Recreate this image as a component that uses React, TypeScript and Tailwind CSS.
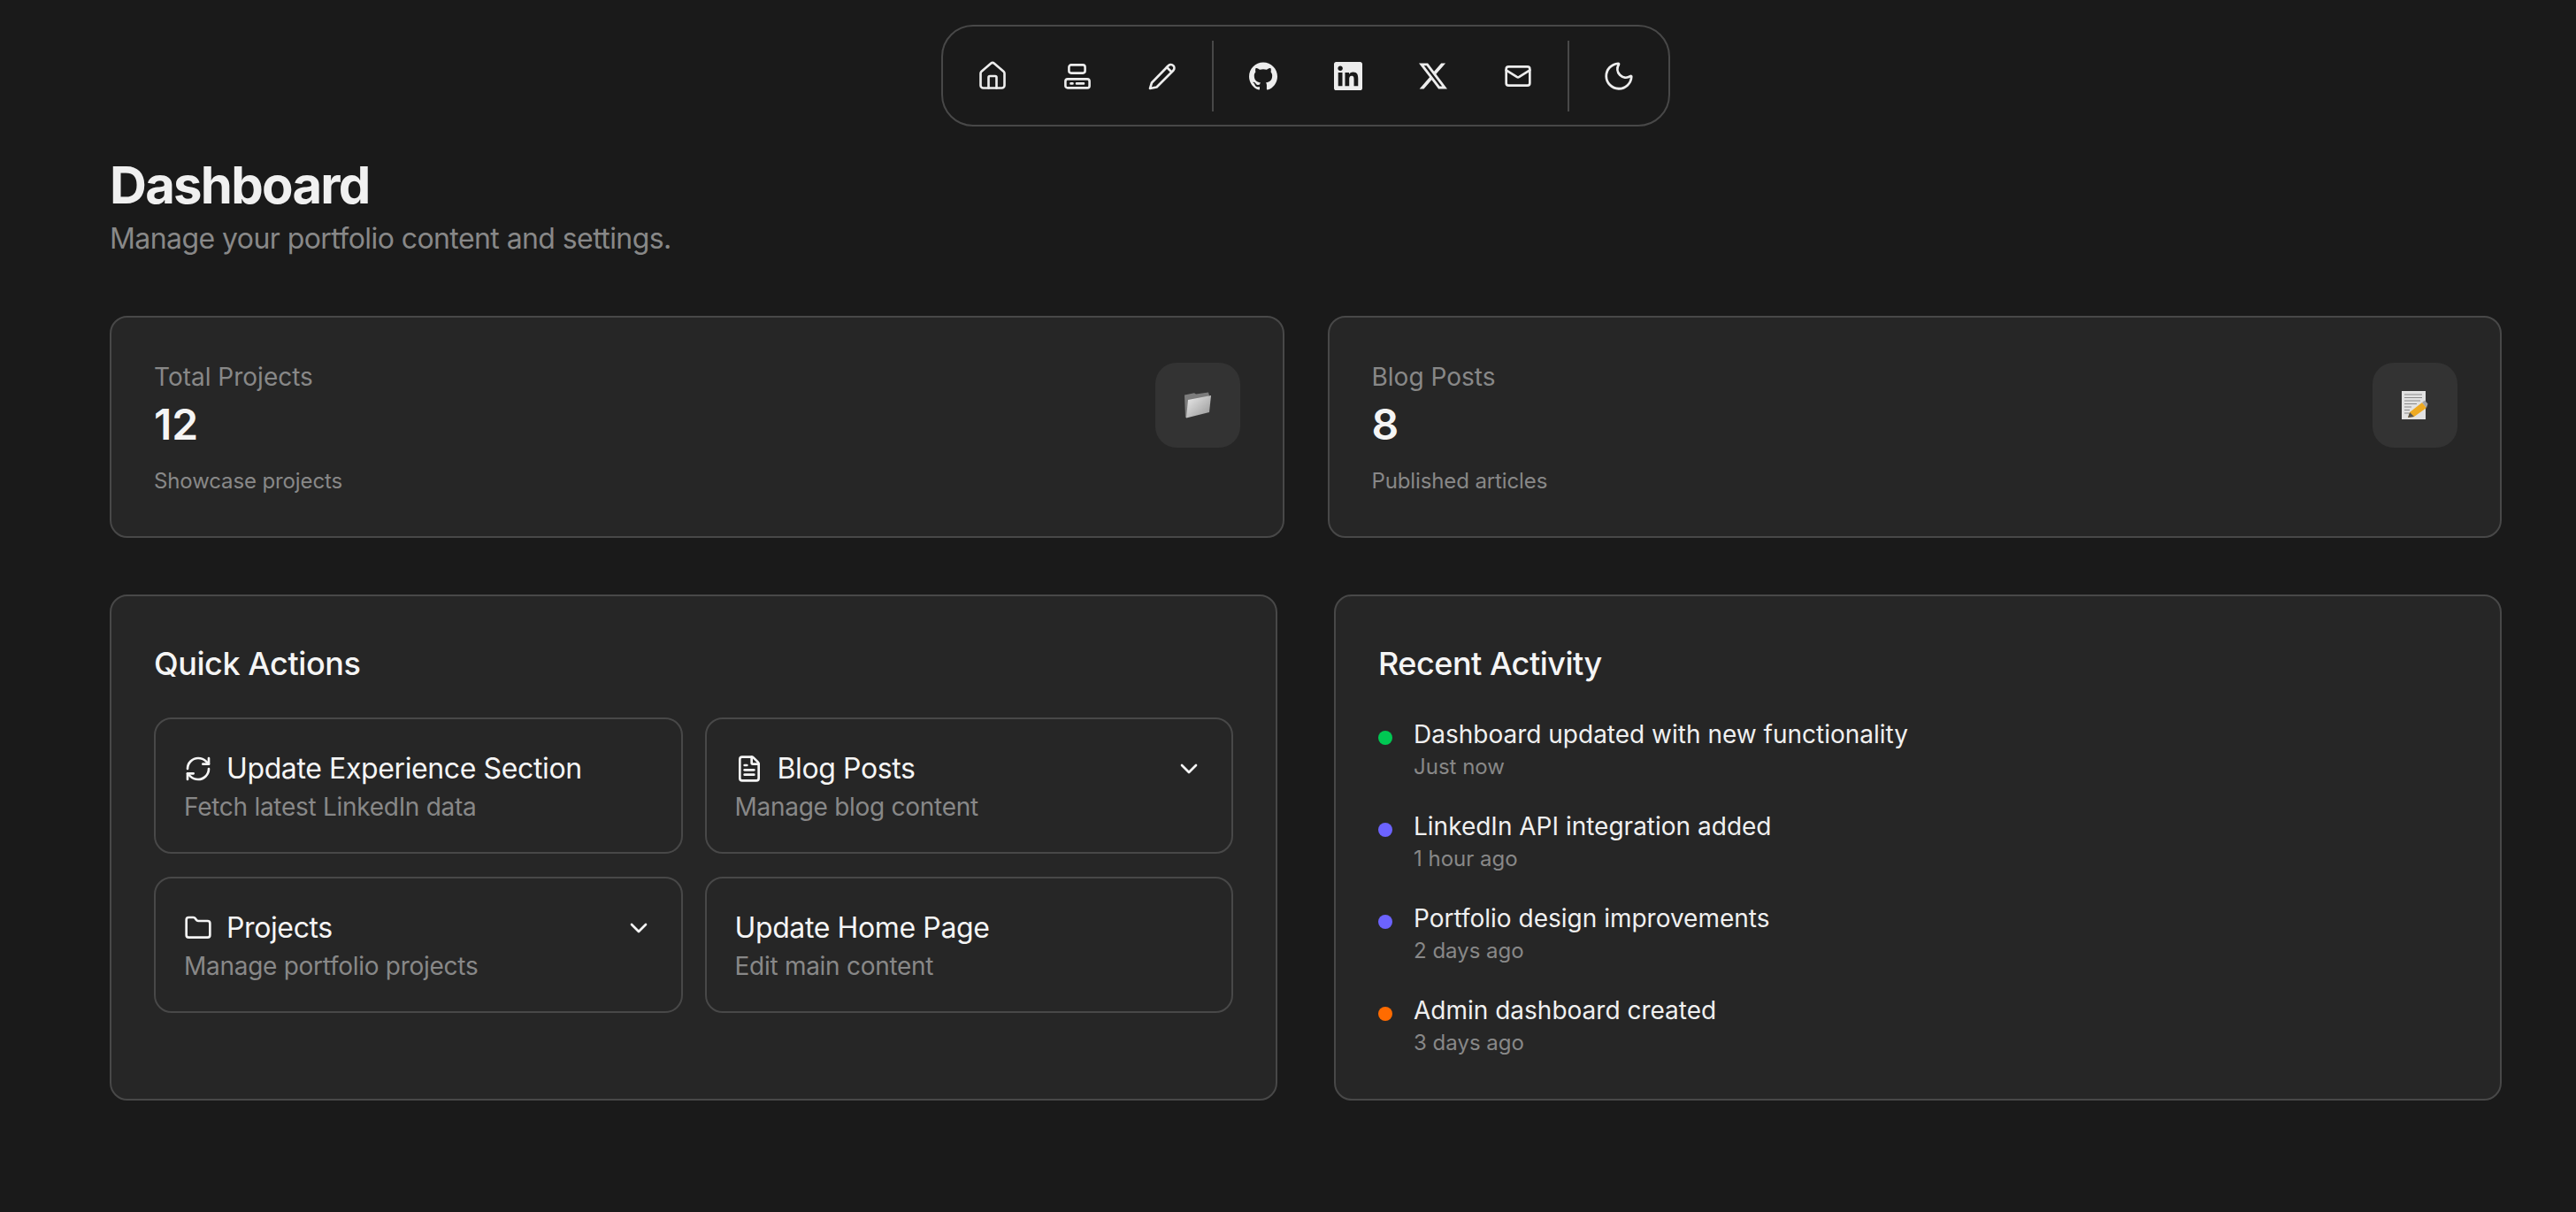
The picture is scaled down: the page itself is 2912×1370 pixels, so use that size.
import { ChevronDown, FileText, Folder, House, Mail, Moon, RefreshCw } from 'lucide-react';
import type { ReactNode } from 'react';
import { SiGithub, SiLinkedin, SiX } from 'react-icons/si';

function StackIcon() {
  return (
    <svg width="36" height="36" viewBox="0 0 36 36" fill="none" stroke="currentColor" strokeWidth="2.6" strokeLinecap="round">
      <rect x="8.4" y="5.4" width="18.2" height="9.2" rx="2.5" />
      <rect x="4.4" y="21.4" width="27.2" height="10" rx="2.5" />
      <path d="M10.5 26.400h2M17 26.400h8" />
    </svg>
  );
}

function PencilIcon() {
  return (
    <svg width="36" height="36" viewBox="0 0 36 36" fill="none" stroke="currentColor" strokeWidth="2.6" strokeLinecap="round" strokeLinejoin="round">
      <path d="M4 32l2-6.500L25 6a3.900 3.900 0 0 1 5.500 5.500L11.500 30.500z" />
      <path d="M23 8l5 5" />
    </svg>
  );
}

function FolderEmoji() {
  return (
    <svg width="32" height="32" viewBox="0 0 32 32">
      <defs>
        <linearGradient id="folder-front" x1="0" y1="0" x2="1" y2="1">
          <stop offset="0" stopColor="#ececec" />
          <stop offset="1" stopColor="#949494" />
        </linearGradient>
      </defs>
      <path d="M1 4.500l11-2.200 2 1.200 14-2 1 3.500L4 30l-2 0z" fill="#7c7c7c" />
      <path d="M5 10l26-5-2 19-26 6.500z" fill="url(#folder-front)" />
    </svg>
  );
}

function NoteEmoji() {
  return (
    <svg width="32" height="32" viewBox="0 0 32 32">
      <rect x="1" y="0" width="27" height="32" fill="#e2e2e2" />
      <path d="M4 4h20M4 7.500h20M4 11h18M4 14.500h14M4 18h8M4 21.500h6M4 25h5" stroke="#8a8a8a" strokeWidth="1" />
      <path d="M10 24L24 13l5 6-14 10-7 1z" fill="#eeaa22" />
      <path d="M24 13l3-2.500 3.500 4-1.500 4.500z" fill="#a3a3a3" />
      <path d="M8 30l2-6 5 5z" fill="#555" />
    </svg>
  );
}

function NavButton({ children }: { children: ReactNode }) {
  return <button className="flex h-[80px] w-24 items-center justify-center text-[#ededed]">{children}</button>;
}

function NavDivider() {
  return <div className="mx-2 h-[80px] w-[2px] bg-[#484848]" />;
}

function StatCard({ label, value, hint, icon }: { label: string; value: string; hint: string; icon: ReactNode }) {
  return (
    <div className="flex items-start justify-between rounded-[20px] border-2 border-[#484848] bg-[#262626] px-12 pt-[47px] pb-[46px]">
      <div>
        <p className="text-[28px] leading-[40px] text-[#888888]">{label}</p>
        <p className="mt-[6px] text-[48px] leading-[56px] font-semibold text-[#f5f5f5]">{value}</p>
        <p className="mt-5 text-[24px] leading-[32px] tracking-[-0.005em] text-[#888888]">{hint}</p>
      </div>
      <div className="mt-1 flex h-24 w-24 items-center justify-center rounded-[24px] bg-[#333333]">{icon}</div>
    </div>
  );
}

function ActionCard({ title, desc, icon, chevron }: { title: string; desc: string; icon?: ReactNode; chevron?: boolean }) {
  return (
    <div className="h-[154px] rounded-[20px] border-2 border-[#484848] px-8 pt-[34px]">
      <div className="flex h-[44px] items-center gap-4 text-[32px] leading-[44px] font-normal tracking-[-0.012em] text-[#f5f5f5]">
        {icon}
        <span>{title}</span>
        {chevron && <ChevronDown size={32} className="ml-auto" />}
      </div>
      <p className="mt-[1px] text-[28px] leading-[40px] tracking-[-0.01em] text-[#888888]">{desc}</p>
    </div>
  );
}

const activity = [
  { text: 'Dashboard updated with new functionality', time: 'Just now', dot: 'bg-[#00c853]' },
  { text: 'LinkedIn API integration added', time: '1 hour ago', dot: 'bg-[#6c63ff]' },
  { text: 'Portfolio design improvements', time: '2 days ago', dot: 'bg-[#6c63ff]' },
  { text: 'Admin dashboard created', time: '3 days ago', dot: 'bg-[#ff6b00]' },
];

export default function App() {
  return (
    <div className="min-h-screen bg-[#1a1a1a] pt-[28px] pr-[84px] pl-[124px] font-['Inter',sans-serif]">
      <div className="flex justify-center">
        <nav className="flex h-[115px] items-center rounded-[36px] border-2 border-[#484848] px-2">
          <NavButton><House size={36} strokeWidth={1.75} /></NavButton>
          <NavButton><StackIcon /></NavButton>
          <NavButton><PencilIcon /></NavButton>
          <NavDivider />
          <NavButton><SiGithub size={32} /></NavButton>
          <NavButton><SiLinkedin size={32} /></NavButton>
          <NavButton><SiX size={32} /></NavButton>
          <NavButton><Mail size={32} strokeWidth={2} /></NavButton>
          <NavDivider />
          <NavButton><Moon size={38} strokeWidth={1.75} /></NavButton>
        </nav>
      </div>

      <h1 className="mt-[34px] text-[58px] leading-[64px] font-bold tracking-[-0.03em] text-[#f0f0f0]">Dashboard</h1>
      <p className="mt-[7px] text-[32px] leading-[44px] tracking-[-0.018em] text-[#888888]">Manage your portfolio content and settings.</p>

      <div className="mt-[65px] grid grid-cols-2 gap-[49px]">
        <StatCard label="Total Projects" value="12" hint="Showcase projects" icon={<FolderEmoji />} />
        <StatCard label="Blog Posts" value="8" hint="Published articles" icon={<NoteEmoji />} />
      </div>

      <div className="mt-[64px] grid grid-cols-2 gap-[64px]">
        <section className="h-[572px] rounded-[20px] border-2 border-[#484848] bg-[#262626] px-12 pt-[50px]">
          <h2 className="text-[36px] leading-[52px] font-medium tracking-[-0.012em] text-[#f5f5f5]">Quick Actions</h2>
          <div className="mt-[35px] grid grid-cols-2 gap-x-[25px] gap-y-[26px]">
            <ActionCard title="Update Experience Section" desc="Fetch latest LinkedIn data" icon={<RefreshCw size={32} />} />
            <ActionCard title="Blog Posts" desc="Manage blog content" icon={<FileText size={32} />} chevron />
            <ActionCard title="Projects" desc="Manage portfolio projects" icon={<Folder size={32} />} chevron />
            <ActionCard title="Update Home Page" desc="Edit main content" />
          </div>
        </section>

        <section className="h-[572px] rounded-[20px] border-2 border-[#484848] bg-[#262626] px-12 pt-[50px]">
          <h2 className="text-[36px] leading-[52px] font-medium tracking-[-0.014em] text-[#f5f5f5]">Recent Activity</h2>
          <div className="mt-[34px] flex flex-col gap-[31px]">
            {activity.map((item) => (
              <div key={item.text} className="flex items-start gap-6">
                <span className={`mt-[16px] h-4 w-4 rounded-full ${item.dot}`} />
                <div>
                  <p className="text-[28px] leading-[40px] font-normal text-[#f0f0f0]">{item.text}</p>
                  <p className="mt-[1px] text-[24px] leading-[32px] text-[#888888]">{item.time}</p>
                </div>
              </div>
            ))}
          </div>
        </section>
      </div>
    </div>
  );
}
